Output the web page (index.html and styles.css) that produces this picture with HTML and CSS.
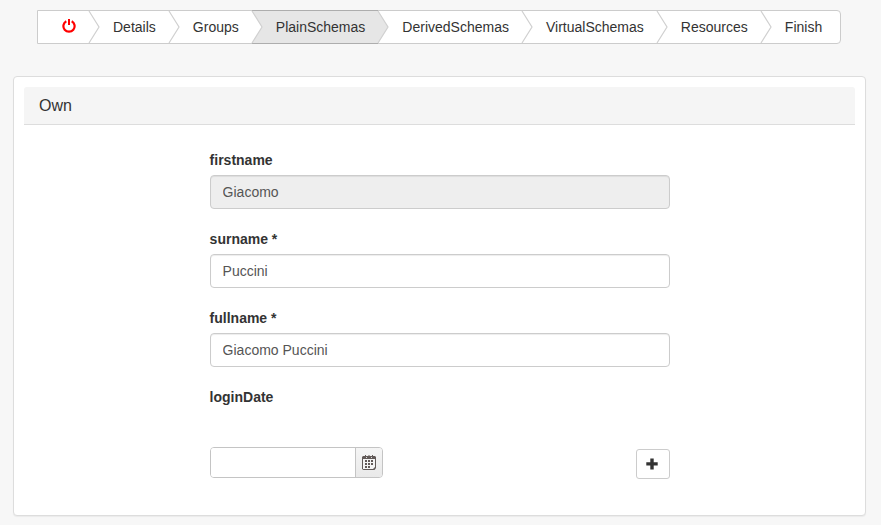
FILE: index.html
```html
<!DOCTYPE html>
<html lang="en">
<head>
<meta charset="utf-8">
<title>PlainSchemas</title>
<link rel="stylesheet" href="styles.css">
</head>
<body>
<nav class="wizard">
  <a class="step home"><svg class="power" viewBox="0 0 14 14"><path d="M4.300 2.200A5.600 5.600 0 1 0 9.700 2.200" fill="none" stroke="#f00" stroke-width="2.200"/><path d="M7 0v6" stroke="#f00" stroke-width="2"/></svg><svg class="arrow" viewBox="0 0 11 32"><path d="M0 0L10 16L0 32"/></svg></a>
  <a class="step">Details<svg class="arrow" viewBox="0 0 11 32"><path d="M0 0L10 16L0 32"/></svg></a>
  <a class="step">Groups<svg class="arrow" viewBox="0 0 11 32"><path d="M0 0L10 16L0 32"/></svg></a>
  <a class="step active">PlainSchemas<svg class="arrow" viewBox="0 0 11 32"><path d="M0 0L10 16L0 32"/></svg></a>
  <a class="step">DerivedSchemas<svg class="arrow" viewBox="0 0 11 32"><path d="M0 0L10 16L0 32"/></svg></a>
  <a class="step">VirtualSchemas<svg class="arrow" viewBox="0 0 11 32"><path d="M0 0L10 16L0 32"/></svg></a>
  <a class="step">Resources<svg class="arrow" viewBox="0 0 11 32"><path d="M0 0L10 16L0 32"/></svg></a>
  <a class="step last">Finish</a>
</nav>
<main class="panel">
  <h1 class="heading">Own</h1>
  <form class="fields">
    <div class="group"><label for="firstname">firstname</label><input class="control" id="firstname" value="Giacomo" readonly></div>
    <div class="group"><label for="surname">surname *</label><input class="control" id="surname" value="Puccini"></div>
    <div class="group"><label for="fullname">fullname *</label><input class="control" id="fullname" value="Giacomo Puccini"></div>
    <label for="login">loginDate</label>
    <div class="date-row">
      <div class="picker">
        <input id="login">
        <button type="button" class="calendar"><svg width="14" height="15" viewBox="0 0 14 15"><path d="M1 1h2V0h1v1h2.500V0h1v1H10V0h1v1h2l1 1v11l-1.500 2H1.500L0 14V2z" fill="#625a58"/><path d="M1 4h12v8l-2 2H1z" fill="#f4f4f4"/><path d="M4 2h1v1H4zM9 2h1v1H9z" fill="#ddd"/><path d="M6 5h2v2H6zM9 5h2v2H9zM3 5h2v2H3zM3 8h2v2H3zM6 8h2v2H6zM9 8h2v2H9zM3 11h2v2H3zM6 11h2v2H6z" fill="#625a58"/></svg></button>
      </div>
      <button type="button" class="add"><svg width="12" height="12" viewBox="0 0 12 12"><path d="M4.300 .5h3.400v3.800h4v3.200h-4v4H4.300v-4h-4V4.300h4z" fill="#333"/></svg></button>
    </div>
  </form>
</main>
</body>
</html>
```
FILE: styles.css
```css
* { box-sizing: border-box; }
body {
  margin: 0;
  padding: 10px 15px 0 13px;
  height: 525px;
  overflow: hidden;
  background: #f7f7f7;
  color: #333;
  font: 14px/20px "Liberation Sans", Arial, sans-serif;
}
.wizard {
  display: flex;
  width: 804px;
  height: 34px;
  margin-left: 24px;
  border: 1px solid #ccc;
  border-radius: 0 4px 4px 0;
  background: #fff;
}
.step {
  position: relative;
  flex: none;
  padding: 6px 13.050px 6px 24px;
  white-space: nowrap;
}
.home { width: 51px; }
.power {
  display: block;
  width: 14px;
  height: 14px;
  margin-top: 2px;
}
.arrow {
  position: absolute;
  z-index: 1;
  top: 0;
  left: 100%;
  width: 11px;
  height: 32px;
  overflow: visible;
}
.arrow path { fill: #fff; stroke: #d0d0d0; stroke-width: 1.200; }
.active { background: #e6e6e6; box-shadow: 0 -1px #adadad, 0 1px #adadad; }
.active .arrow path { fill: #e6e6e6; }
.panel {
  height: 440px;
  margin-top: 32px;
  padding: 10px;
  border: 1px solid #ddd;
  border-radius: 4px;
  background: #fff;
  box-shadow: 0 1px 1px rgba(0, 0, 0, .05);
}
.heading {
  height: 38px;
  margin: 0 0 25px;
  padding: 9px 15px;
  border-bottom: 1px solid #ddd;
  border-radius: 3px 3px 0 0;
  background: #f5f5f5;
  font-size: 16px;
  font-weight: 400;
  line-height: 19px;
}
.fields { width: 460px; margin-left: 185.600px; }
.group { height: 79px; }
label { display: block; margin-bottom: 5px; font-weight: 700; }
.fields > label { margin-bottom: 0; }
.control {
  display: block;
  width: 100%;
  height: 34px;
  padding: 6px 12px;
  border: 1px solid #ccc;
  border-radius: 4px;
  background: #fff;
  box-shadow: inset 0 1px 1px rgba(0, 0, 0, .075);
  color: #555;
  font: inherit;
}
.control[readonly] { background: #eee; }
.date-row {
  display: flex;
  justify-content: space-between;
  margin-top: 40px;
}
.picker {
  display: flex;
  width: 173px;
  height: 31px;
  border: 1px solid #c4c4c4;
  border-radius: 4px;
  overflow: hidden;
}
.picker input {
  width: 144px;
  padding: 0 6px;
  border: 0;
  font: inherit;
}
.calendar {
  display: grid;
  place-items: center;
  flex: 1;
  padding: 0;
  border: 0;
  border-left: 1px solid #c4c4c4;
  background: linear-gradient(#f5f5f5, #e9e9e9);
}
.add {
  display: grid;
  place-items: center;
  width: 34px;
  height: 30px;
  margin-top: 2px;
  padding: 0 2px 0 0;
  border: 1px solid #ccc;
  border-radius: 3px;
  background: #fff;
}
```
